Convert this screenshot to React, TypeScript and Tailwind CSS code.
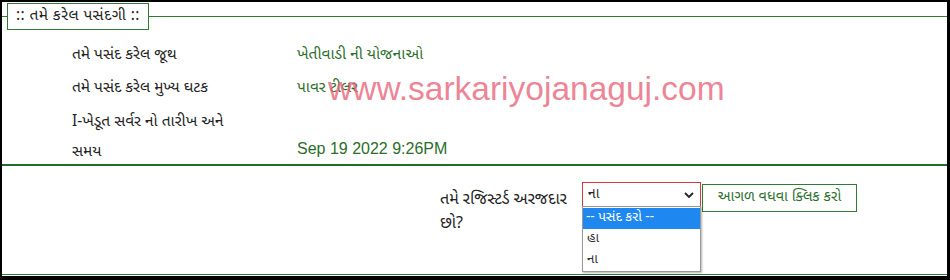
const guj = "font-['Noto_Sans_Gujarati','Lohit_Gujarati','Noto_Sans','DejaVu_Sans',sans-serif]";

function Row({ label, value, alignEnd }: { label: React.ReactNode; value: React.ReactNode; alignEnd?: boolean }) {
  return (
    <div className={`flex ${alignEnd ? "items-end" : "items-center"}`}>
      <div className="w-[225px] shrink-0 text-[15.5px] leading-[33px] text-[#222]">{label}</div>
      <div className="text-[15.5px] leading-[33px] text-[#2a6e2a]">{value}</div>
    </div>
  );
}

export default function App() {
  return (
    <div className={`w-[950px] h-[280px] bg-black p-[2px] pr-[3px] pb-[4px] ${guj}`}>
      <div className="relative w-full h-full bg-white flex flex-col">
        {/* selected info block */}
        <div className="relative h-[162px] shrink-0">
          <div className="absolute left-0 right-0 top-[14px] border-t border-[#2e7d32]" />
          <div className="absolute left-[5px] top-[1px] h-[27px] px-[8px] border border-[#2e7d32] bg-white text-[15.5px] tracking-[0.4px] leading-[25px] text-[#222]">
            :: તમે કરેલ પસંદગી ::
          </div>
          <div className="pt-[37px] pl-[70px] flex flex-col">
            <Row label="તમે પસંદ કરેલ જૂથ" value="ખેતીવાડી ની યોજનાઓ" />
            <Row label="તમે પસંદ કરેલ મુખ્ય ઘટક" value="પાવર ટીલર" />
            <Row
              alignEnd
              label={<span className="block w-[175px] leading-[30px] pt-[2px]">I-ખેડૂત સર્વર નો તારીખ અને સમય</span>}
              value={<span className="font-['Liberation_Sans',Arial,sans-serif] text-[16px] leading-[30px]">Sep 19 2022 9:26PM</span>}
            />
          </div>
          <div className="absolute left-[326px] top-[69px] font-['Liberation_Sans',Arial,sans-serif] text-[33.5px] leading-[36px] text-[#e8647a]/80">
            www.sarkariyojanaguj.com
          </div>
        </div>
        <div className="h-[2px] bg-[#1f6b2a] shrink-0" />

        {/* registered applicant */}
        <div className="relative flex-1 flex">
          <div className="pl-[438px] pt-[16px] flex items-start">
            <div className="w-[142px] pt-[7px] text-[16px] leading-[24px] text-[#222]">તમે રજિસ્ટર્ડ અરજદાર છો?</div>
            <div className="relative">
              <div className="w-[119px] h-[25px] border border-[#d23b3b] flex items-center justify-between px-[5px] text-[14px] text-[#222] bg-white">
                <span>ના</span>
                <svg width="12" height="12" viewBox="0 0 12 12" fill="none" stroke="#222" strokeWidth="1.8">
                  <path d="M2 4l4 4 4-4" />
                </svg>
              </div>
              <div className="absolute left-0 top-[24px] w-[119px] border border-[#999] bg-white shadow-[1px_1px_2px_rgba(0,0,0,0.3)] text-[13.5px] z-10">
                <div className="h-[21px] leading-[21px] px-[3px] mt-[1px] bg-[#1e88f0] text-white">-- પસંદ કરો --</div>
                <div className="h-[21px] leading-[21px] px-[4px] text-[#333]">હા</div>
                <div className="h-[21px] leading-[21px] px-[4px] text-[#333]">ના</div>
              </div>
            </div>
            <button className="ml-[1px] mt-[2px] w-[155px] h-[28px] border border-[#2e7d32] bg-white text-[14.5px] text-[#2a6e2a]">
              આગળ વધવા ક્લિક કરો
            </button>
          </div>
          <div className="absolute left-0 right-0 bottom-[1px] border-t border-[#2e7d32]" />
        </div>
      </div>
    </div>
  );
}
